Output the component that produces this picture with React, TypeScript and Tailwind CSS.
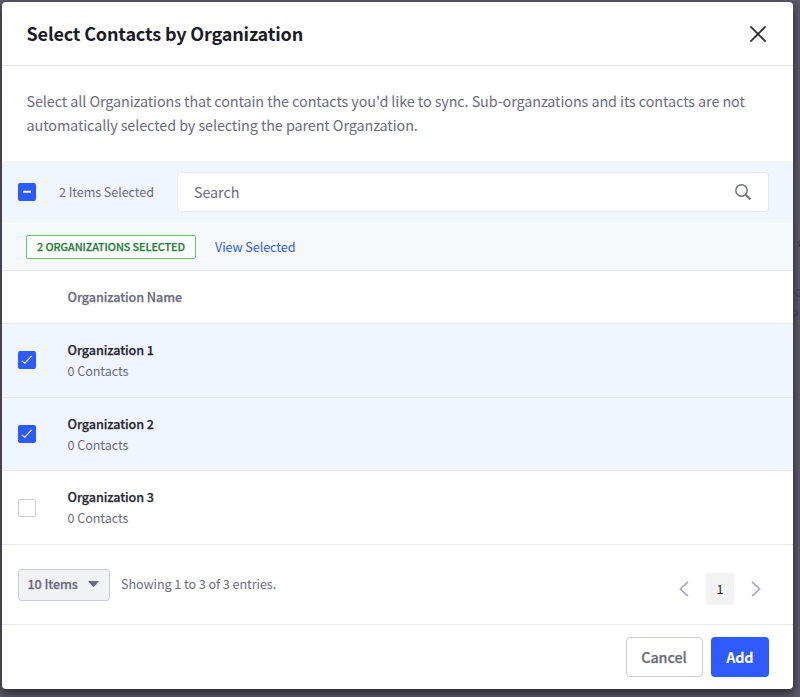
import React from "react";

function CheckBox({ state }: { state: "on" | "off" | "mixed" }) {
  if (state === "off") {
    return <div className="h-[18px] w-[18px] shrink-0 rounded-[2px] border border-[#cdced9] bg-white" />;
  }
  return (
    <div className="h-[18px] w-[18px] shrink-0 rounded-[2px] bg-[#2e5aff]">
      <svg viewBox="0 0 18 18" className="h-[18px] w-[18px]" fill="none" stroke="#fff">
        {state === "mixed" ? (
          <path d="M5 8.7H13" strokeWidth="2" />
        ) : (
          <path d="M3.8 9.9L6.8 12.2L13.6 4.8" strokeWidth="1.1" />
        )}
      </svg>
    </div>
  );
}

const rows = [
  { name: "Organization 1", checked: true },
  { name: "Organization 2", checked: true },
  { name: "Organization 3", checked: false },
];

export default function App() {
  return (
    <div className="relative h-[697px] w-[800px] overflow-hidden bg-[#5d5b68] pl-[2px] pt-[2px] font-['Noto_Sans_CJK_JP','Noto_Sans',sans-serif] whitespace-nowrap text-[#6b6c7e]">
      <div className="flex h-[687px] w-[791px] flex-col overflow-hidden rounded-[4px] bg-white shadow-[0_4px_10px_1px_rgba(25,25,35,0.75)]">
        <header className="flex h-[64px] shrink-0 items-center justify-between border-b border-[#e7e7ed] pl-[24.5px] pr-[26px]">
          <h1 className="-mt-[2px] text-[18px] leading-[24px] font-bold tracking-[-0.15px] text-[#1c1c28]">
            Select Contacts by Organization
          </h1>
          <svg viewBox="0 0 18 18" className="h-[18px] w-[18px]" fill="none" stroke="#272833" strokeWidth="1.7">
            <path d="M1.4 1.4L16.6 16.6M16.6 1.4L1.4 16.6" />
          </svg>
        </header>

        <p className="h-[95px] shrink-0 pl-[24.5px] pt-[23px] text-[14.4px] leading-[24px] tracking-[-0.095px]">
          Select all Organizations that contain the contacts you'd like to sync. Sub-organzations and its contacts are not
          <br />
          automatically selected by selecting the parent Organzation.
        </p>

        <div className="flex h-[62px] shrink-0 items-center rounded-t-[3px] bg-[#f0f5ff] pl-[16px] pr-[24px]">
          <CheckBox state="mixed" />
          <span className="ml-[23px] w-[118px] text-[12.6px] tracking-[-0.07px]">2 Items Selected</span>
          <div className="flex h-[40px] flex-1 items-center justify-between rounded-[4px] border border-[#e7e7ed] bg-white pl-[16px] pr-[17px]">
            <span className="text-[14.4px] tracking-[-0.1px]">Search</span>
            <svg viewBox="0 0 16 16" className="h-[16px] w-[16px]" fill="none" stroke="#6b6c7e" strokeWidth="1.4">
              <circle cx="6.5" cy="6.5" r="5.7" />
              <path d="M10.7 10.7L15.4 15.4" strokeWidth="2" />
            </svg>
          </div>
        </div>

        <div className="flex h-[48px] shrink-0 items-center border-b border-[#e7e7ed] bg-[#f7f8f9] pl-[24px]">
          <span className="flex h-[24px] w-[170px] items-center justify-center rounded-[2px] border border-[#5aca75] bg-white text-[10.8px] font-medium tracking-[-0.08px] text-[#287d3c] [-webkit-text-stroke:0.25px]">
            2 ORGANIZATIONS SELECTED
          </span>
          <span className="mt-px ml-[19px] text-[12.6px] tracking-[-0.07px] text-[#2e5aff]">View Selected</span>
        </div>

        <div className="flex h-[52px] shrink-0 items-center pl-[65.5px] text-[12.6px] font-medium tracking-[-0.07px] [-webkit-text-stroke:0.25px]">
          Organization Name
        </div>

        {rows.map((row) => (
          <div
            key={row.name}
            className={
              row.checked
                ? "flex h-[73.67px] shrink-0 items-center border-t border-[#e7e7ed] bg-[#f0f5ff] pl-[16px]"
                : "flex h-[73.67px] shrink-0 items-center border-t border-[#e7e7ed] bg-white pl-[16px]"
            }
          >
            <CheckBox state={row.checked ? "on" : "off"} />
            <div className="-mt-[0.8px] ml-[31.5px] text-[12.6px] leading-[21px]">
              <div className="font-medium tracking-[-0.07px] text-[#272833] [-webkit-text-stroke:0.25px]">{row.name}</div>
              <div className="tracking-[-0.07px]">0 Contacts</div>
            </div>
          </div>
        ))}

        <div className="flex h-[80px] shrink-0 items-center border-t border-[#e7e7ed] pl-[16px] pr-[32px]">
          <div className="mt-px flex h-[32px] w-[92px] items-center justify-between rounded-[3px] border border-[#cdced9] bg-[#f1f2f5] pl-[8.5px] pr-[10px]">
            <span className="-mt-px text-[12.6px] font-medium tracking-[-0.07px] [-webkit-text-stroke:0.25px]">10 Items</span>
            <svg viewBox="0 0 11 6" className="-mt-px h-[6px] w-[11px]" fill="#6b6c7e">
              <path d="M1 0H10Q11 0 10.4 .9L6.2 5.6Q5.5 6.2 4.8 5.6L.6 .9Q0 0 1 0Z" />
            </svg>
          </div>
          <span className="ml-[11px] text-[12.6px] tracking-[-0.07px]">Showing 1 to 3 of 3 entries.</span>
          <div className="mt-[9px] ml-auto flex items-center">
            <svg viewBox="0 0 10 16" className="h-[16px] w-[10px]" fill="none" stroke="#a7a9bc" strokeWidth="1.6">
              <path d="M9 .8L1.3 8L9 15.2" />
            </svg>
            <span className="mx-[17px] flex h-[32px] w-[28px] items-center justify-center rounded-[3px] bg-[#f3f3f4] text-[12.6px] text-[#272833]">
              1
            </span>
            <svg viewBox="0 0 10 16" className="h-[16px] w-[10px]" fill="none" stroke="#a7a9bc" strokeWidth="1.6">
              <path d="M1 .8L8.7 8L1 15.2" />
            </svg>
          </div>
        </div>

        <footer className="flex flex-1 items-center justify-end gap-[8px] border-t border-[#e7e7ed] pr-[24px] text-[14.4px] font-medium">
          <button className="h-[40px] w-[77px] rounded-[4px] border border-[#cdced9] bg-white tracking-[-0.07px] [-webkit-text-stroke:0.25px]">
            Cancel
          </button>
          <button className="h-[40px] w-[58.5px] rounded-[4px] bg-[#2e5aff] font-bold tracking-[-0.2px] text-white">Add</button>
        </footer>
      </div>
      <svg viewBox="0 0 7 80" className="absolute top-[238px] left-[793px] h-[80px] w-[7px]" fill="none" stroke="#3c3b48">
        <path d="M7 3Q4.5 3 5 5Q7 6 7 8Q6 9 4.5 8" />
        <circle cx="5.5" cy="55" r="3.2" />
        <circle cx="1" cy="75" r="3.2" />
      </svg>
    </div>
  );
}
